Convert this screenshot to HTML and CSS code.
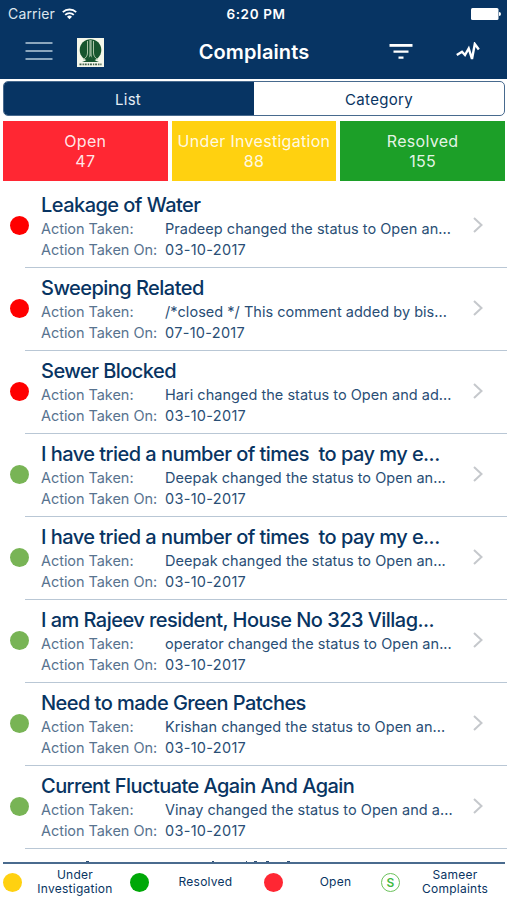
FILE: index.html
```html
<!DOCTYPE html>
<html lang="en">
<head>
    <meta charset="UTF-8">
    <meta name="viewport" content="width=device-width, initial-scale=1.0">
    <title>Complaints</title>
    <link rel="stylesheet" href="styles.css">
</head>
<body>
    <header>
        <div class="status-bar">
            <span class="carrier">Carrier
                <svg width="15" height="12" viewBox="0 0 15 12" fill="none" stroke="#fff" stroke-width="1.8">
                    <path d="M0.8 4.2a9.6 9.6 0 0 1 13.4 0M3.2 6.9a6.1 6.1 0 0 1 8.6 0"/>
                    <path d="M7.5 11.2L5 8.7a3.6 3.6 0 0 1 5 0z" fill="#fff" stroke="none"/>
                </svg>
            </span>
            <span class="time">6:20 PM</span>
            <svg class="battery" width="30" height="12" viewBox="0 0 30 12" fill="#fff">
                <rect width="27.5" height="12" rx="1.5"/>
                <path d="M28 4a2 2 0 0 1 0 4z"/>
            </svg>
        </div>
        <nav class="nav-bar">
            <div class="nav-left">
                <svg width="28" height="20" viewBox="0 0 28 20" stroke="#b8cbdc" stroke-width="1.6">
                    <path d="M0.5 1h27M0.5 9h27M0.5 17h27"/>
                </svg>
                <svg class="logo" width="27" height="29" viewBox="0 0 27 29">
                    <rect width="27" height="29" fill="#f4f7ea"/>
                    <circle cx="13.5" cy="12" r="10.8" fill="#17552e"/>
                    <path d="M11 22c1-2 1.3-4 1.3-7V2h2.4v13c0 3 .3 5 1.3 7z" fill="#8fb093"/>
                    <path d="M10.5 3v12c0 3-2 5-4 6.5M16.5 3v12c0 3 2 5 4 6.5" stroke="#a9c3a4" stroke-width="1" fill="none"/>
                    <path d="M5 24c4-1 6-3 8.5-6 2.5 3 4.5 5 8.5 6z" fill="#17552e"/>
                    <path d="M2.5 26.3h22" stroke="#44614a" stroke-width="1.8" stroke-dasharray="2 1 1.4 0.8"/>
                </svg>
            </div>
            <h1>Complaints</h1>
            <div class="nav-right">
                <svg width="24" height="17" viewBox="0 0 24 17" stroke="#fff" fill="none">
                    <path d="M0.5 1.4h23" stroke-width="2.8"/>
                    <path d="M4.5 7.6h15M9.5 13.6h5" stroke-width="2.2"/>
                </svg>
                <svg width="24" height="20" viewBox="0 0 24 20" stroke="#fff" stroke-width="2.4" fill="none">
                    <path d="M0.8 13L6 9.8l3 3.2L12.7 6.5l3.3 10.5L18.8 2l4 5.5"/>
                </svg>
            </div>
        </nav>
    </header>

    <div class="tabs">
        <div class="tab active">List</div>
        <div class="tab">Category</div>
    </div>

    <div class="summary">
        <div class="box red">Open<br>47</div>
        <div class="box yellow">Under Investigation<br>88</div>
        <div class="box green">Resolved<br>155</div>
    </div>

    <!-- rows are filled in by script.js -->
    <main id="complaintList"></main>

    <!-- top edge of the row scrolled under the legend -->
    <svg class="peek" width="507" height="1" viewBox="0 0 507 1" fill="#2f5075">
        <path d="M86 0h3v1h-3zM212 0h2v1h-2zM246 0h1v1h-1zM254 0h3v1h-3zM266 0h3v1h-3zM287 0h3v1h-3z"/>
    </svg>

    <footer>
        <div class="legend"><span class="dot yellow"></span><span class="label">Under<br>Investigation</span></div>
        <div class="legend"><span class="dot resolved"></span><span class="label">Resolved</span></div>
        <div class="legend"><span class="dot red"></span><span class="label">Open</span></div>
        <div class="legend"><span class="dot sameer">S</span><span class="label">Sameer<br>Complaints</span></div>
    </footer>
    <script src="script.js"></script>
</body>
</html>
```
FILE: styles.css
```css
* {
    box-sizing: border-box;
}

body {
    font-family: Inter, "Liberation Sans", sans-serif;
    background-color: #fff;
    color: #083462;
    margin: 0;
    height: 900px;
    display: flex;
    flex-direction: column;
    overflow: hidden;
}

svg {
    display: block;
}

header {
    background-color: #073463;
    color: #fff;
    height: 79px;
    flex: none;
}

/* Status bar */
.status-bar {
    display: grid;
    grid-template-columns: 1fr auto 1fr;
    align-items: center;
    height: 27px;
    padding: 0 6px 0 8px;
    font-size: 14px;
}

.carrier {
    display: flex;
    align-items: center;
    gap: 7px;
    color: #dde6ee;
    letter-spacing: 0.15px;
}

.time {
    font-weight: 600;
    font-size: 13.5px;
    letter-spacing: 0.6px;
    margin-left: 3px;
}

.battery {
    justify-self: end;
}

/* Navigation bar */
.nav-bar {
    display: grid;
    grid-template-columns: 1fr auto 1fr;
    align-items: center;
    height: 50px;
    padding: 0 27px 0 25px;
}

.nav-left {
    display: flex;
    align-items: center;
    gap: 24px;
}

.nav-right {
    display: flex;
    align-items: center;
    justify-content: flex-end;
    gap: 43px;
}

h1 {
    font-size: 20px;
    font-weight: 600;
    letter-spacing: 0.1px;
    margin: 0 0 0 3px;
}

/* List / Category switch */
.tabs {
    display: flex;
    flex: none;
    height: 35px;
    margin: 2px 2px 0 3px;
    border: 1px solid #486a8e;
    border-radius: 5px;
    overflow: hidden;
    font-size: 15px;
    letter-spacing: 0.3px;
}

.tab {
    flex: 1 1 0;
    display: flex;
    align-items: center;
    justify-content: center;
    padding-top: 2px;
}

.tab.active {
    flex: none;
    width: 250px;
    background-color: #073463;
    color: #e4edf5;
    padding-right: 2px;
}

/* Coloured totals */
.summary {
    display: grid;
    grid-template-columns: repeat(3, 1fr);
    gap: 4px;
    flex: none;
    margin: 5px 2px 4px 3px;
}

.box {
    height: 60px;
    padding-top: 10px;
    text-align: center;
    font-size: 16px;
    line-height: 20px;
    letter-spacing: 0.3px;
    color: rgba(255, 255, 255, 0.9);
    white-space: nowrap;
}

.red {
    background-color: #ff2733;
}

.yellow {
    background-color: #ffd110;
}

.green {
    background-color: #1c9f28;
}

/* Complaint rows */
main {
    flex: 1;
    overflow: hidden;
}

.row {
    display: grid;
    grid-template-columns: 25px 1fr;
    height: 83px;
}

.row .dot {
    align-self: center;
    justify-self: end;
    margin: 0 -4px 2px 0;
}

.content {
    display: grid;
    grid-template-columns: 1fr 10px;
    align-items: center;
    padding: 0 24px 0 16px;
    border-bottom: 1px solid #b9c7d5;
}

.content svg {
    margin-bottom: 2px;
}

.text {
    white-space: nowrap;
}

h2 {
    font-size: 20px;
    font-weight: 500;
    letter-spacing: -0.54px;
    line-height: 26px;
    margin: 0;
    white-space: pre;
}

.detail {
    display: flex;
    font-size: 14.5px;
    line-height: 21px;
}

.detail .key {
    width: 124px;
    color: #58738f;
    letter-spacing: -0.05px;
}

.detail .value {
    color: #294e75;
    letter-spacing: 0.03px;
}

.detail .date {
    letter-spacing: 0.3px;
}

.peek {
    flex: none;
}

.dot {
    display: block;
    flex: none;
    width: 19px;
    height: 19px;
    border-radius: 50%;
}

.dot.open {
    background-color: #ff0000;
}

.dot.closed {
    background-color: #78b455;
}

/* Legend */
footer {
    display: grid;
    grid-template-columns: 127px 134px 117px 1fr;
    flex: none;
    height: 38px;
    margin: 0 2px 0 3px;
    border-top: 2px solid #4a6b8e;
    font-size: 12px;
    line-height: 14px;
    letter-spacing: 0.25px;
}

.legend {
    display: flex;
    align-items: center;
}

.label {
    flex: 1;
    text-align: center;
    padding-right: 2px;
}

.red + .label {
    padding: 0 0 0 7px;
}

.sameer + .label {
    padding: 0 0 0 5px;
}

.dot.resolved {
    background-color: #00a808;
}

.dot.sameer {
    border: 1px solid #6cc25c;
    color: #3fb93f;
    font-weight: 600;
    line-height: 17px;
    text-align: center;
}
```
FILE: script.js
```js
const complaints = [
    ["Leakage of Water", "Pradeep changed the status to Open an...", "03-10-2017", "open"],
    ["Sweeping Related", "/*closed */ This comment added by bis...", "07-10-2017", "open"],
    ["Sewer Blocked", "Hari changed the status to Open and ad...", "03-10-2017", "open"],
    ["I have tried a number of times  to pay my e...", "Deepak changed the status to Open an...", "03-10-2017", "closed"],
    ["I have tried a number of times  to pay my e...", "Deepak changed the status to Open an...", "03-10-2017", "closed"],
    ["I am Rajeev resident, House No 323 Villag...", "operator changed the status to Open an...", "03-10-2017", "closed"],
    ["Need to made Green Patches", "Krishan changed the status to Open an...", "03-10-2017", "closed"],
    ["Current Fluctuate Again And Again", "Vinay changed the status to Open and a...", "03-10-2017", "closed"]
];

const list = document.getElementById("complaintList");

complaints.forEach(([title, action, date, state]) => {
    const row = document.createElement("div");
    row.className = "row";
    row.innerHTML = `
        <span class="dot ${state}"></span>
        <div class="content">
            <div class="text">
                <h2>${title}</h2>
                <div class="detail"><span class="key">Action Taken:</span><span class="value">${action}</span></div>
                <div class="detail"><span class="key">Action Taken On:</span><span class="value date">${date}</span></div>
            </div>
            <svg width="10" height="16" viewBox="0 0 10 16" fill="none" stroke="#c5c8cc" stroke-width="2">
                <path d="M1 1l7.5 7L1 15"/>
            </svg>
        </div>`;
    list.appendChild(row);
});
```
